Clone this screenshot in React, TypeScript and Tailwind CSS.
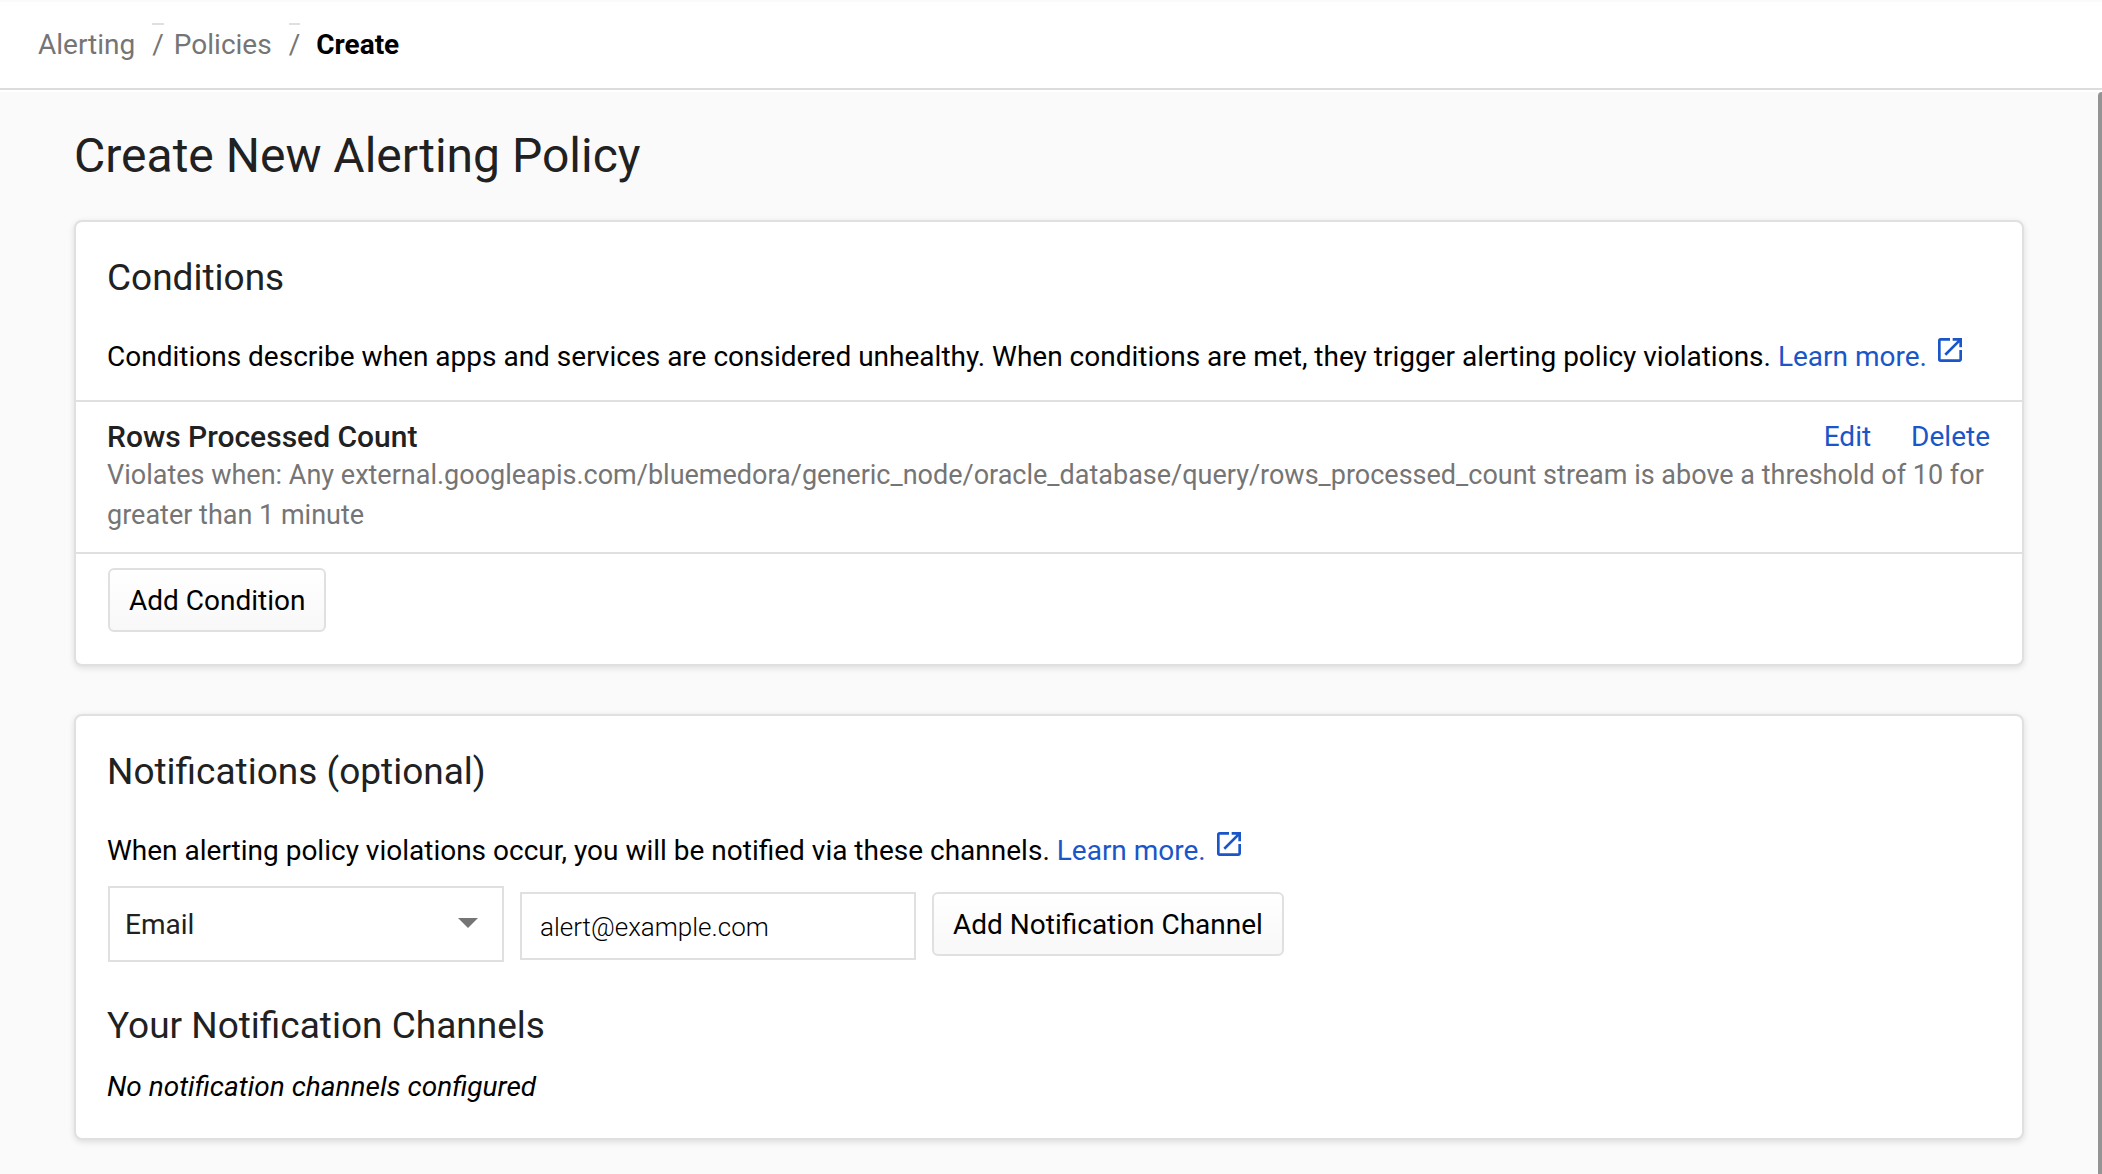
import { useState, FormEvent, ReactNode } from 'react'
import { MdOpenInNew } from 'react-icons/md'

const channelTypes = ['Email', 'SMS', 'Slack', 'Webhook']

const initialConditions = [
  {
    id: 1,
    name: 'Rows Processed Count',
    summary:
      'Violates when: Any external.googleapis.com/bluemedora/generic_node/oracle_database/query/rows_processed_count stream is above a threshold of 10 for greater than 1 minute',
  },
]

function Separator() {
  return (
    <span
      aria-hidden="true"
      className="relative text-[#757575] before:absolute before:inset-x-0 before:-top-0.5 before:h-0.5 before:bg-[#e0e0e0]"
    >
      /
    </span>
  )
}

function Card({ title, children }: { title: string; children: ReactNode }) {
  return (
    <section className="mb-12 rounded-lg border-2 border-[#e0e0e0] bg-white pt-9 shadow-[0_2px_6px_rgba(0,0,0,0.12)]">
      <h2 className="mb-[39px] px-[31px] text-[37px] leading-10 text-[#212121]">{title}</h2>
      {children}
    </section>
  )
}

function LearnMore() {
  return (
    <a href="#learn-more" className="text-[#1a56c8]">
      Learn more.
      <MdOpenInNew className="-mt-1 ml-[7px] inline-block size-8 align-baseline" />
    </a>
  )
}

function Button({ type = 'button', children }: { type?: 'button' | 'submit'; children: ReactNode }) {
  return (
    <button
      type={type}
      className="h-16 rounded-md border-2 border-[#e0e0e0] bg-linear-to-b from-white to-[#f8f8f8] px-[19px] pt-0.5"
    >
      {children}
    </button>
  )
}

export default function App() {
  const [conditions, setConditions] = useState(initialConditions)
  const [channelType, setChannelType] = useState('Email')
  const [address, setAddress] = useState('alert@example.com')
  const [channels, setChannels] = useState<string[]>([])

  function handleSubmit(e: FormEvent<HTMLFormElement>) {
    e.preventDefault()
    if (!address.trim()) return
    setChannels([...channels, `${channelType}: ${address}`])
    setAddress('')
  }

  return (
    <div className="flex min-h-screen flex-col bg-white font-[Roboto,sans-serif] text-[28px] leading-10 text-black">
      {/* Breadcrumb */}
      <header className="border-t-2 border-b-2 border-t-[#fafafa] border-b-[#dcdcdc] px-[38px] pt-[23px] pb-[23px]">
        <nav aria-label="Breadcrumb" className="flex items-center">
          <a href="#alerting" className="mr-[17px] text-[#757575]">Alerting</a>
          <Separator />
          <a href="#policies" className="mr-[17px] ml-2.5 text-[#757575]">Policies</a>
          <Separator />
          <span aria-current="page" className="ml-4 font-bold">Create</span>
        </nav>
      </header>

      <main className="relative mt-0.5 grow bg-[#fafafa] pt-9 pr-[78px] pl-[74px]">
        <h1 className="mb-9 text-[48px] leading-14 text-[#212121]">Create New Alerting Policy</h1>

        <Card title="Conditions">
          <p className="px-[31px] pb-[23px]">
            Conditions describe when apps and services are considered unhealthy. When conditions are
            met, they trigger alerting policy violations. <LearnMore />
          </p>
          {conditions.map(condition => (
            <div key={condition.id} className="border-t-2 border-[#e0e0e0] px-[31px] py-[17px]">
              <div className="flex leading-9">
                <h3 className="grow text-[30px] font-medium text-[#212121]">{condition.name}</h3>
                <button type="button" className="text-[#1a56c8]">Edit</button>
                <button
                  type="button"
                  className="mr-px ml-10 text-[#1a56c8]"
                  onClick={() => setConditions(conditions.filter(c => c.id !== condition.id))}
                >
                  Delete
                </button>
              </div>
              <p className="text-[27px] text-[#757575]">{condition.summary}</p>
            </div>
          ))}
          <div className="border-t-2 border-[#e0e0e0] px-8 pt-3.5 pb-8">
            <Button>Add Condition</Button>
          </div>
        </Card>

        <Card title="Notifications (optional)">
          <p className="px-[31px]">
            When alerting policy violations occur, you will be notified via these channels.{' '}
            <LearnMore />
          </p>
          <form onSubmit={handleSubmit} className="mt-[15px] flex items-start gap-4 px-8">
            <div className="relative w-[396px]">
              <select
                aria-label="Channel type"
                value={channelType}
                onChange={e => setChannelType(e.target.value)}
                className="h-[76px] w-full appearance-none border-2 border-[#e0e0e0] bg-white px-[15px] pt-0.5 text-[#212121]"
              >
                {channelTypes.map(type => (
                  <option key={type}>{type}</option>
                ))}
              </select>
              <svg viewBox="0 0 20 10" className="pointer-events-none absolute top-8 right-[26px] h-2.5 w-5 fill-[#757575]">
                <path d="M0 0h20L10 10z" />
              </svg>
            </div>
            <input
              type="email"
              aria-label="Email address"
              value={address}
              onChange={e => setAddress(e.target.value)}
              className="mt-1.5 h-[68px] w-[396px] border-2 border-[#e0e0e0] bg-white px-[18px] pt-0.5 text-[26px] font-light"
            />
            <div className="mt-1.5 flex">
              <Button type="submit">Add Notification Channel</Button>
            </div>
          </form>

          <div className="px-[31px] pt-11 pb-[31px]">
            <h2 className="mb-[21px] text-[37px] leading-10 text-[#212121]">Your Notification Channels</h2>
            {channels.length === 0 ? (
              <p className="italic">No notification channels configured</p>
            ) : (
              <ul>
                {channels.map(channel => (
                  <li key={channel}>{channel}</li>
                ))}
              </ul>
            )}
          </div>
        </Card>

        {/* Scroll thumb */}
        <div className="absolute inset-y-0 right-0 w-1 rounded-tl bg-[#949494]" />
      </main>
    </div>
  )
}
